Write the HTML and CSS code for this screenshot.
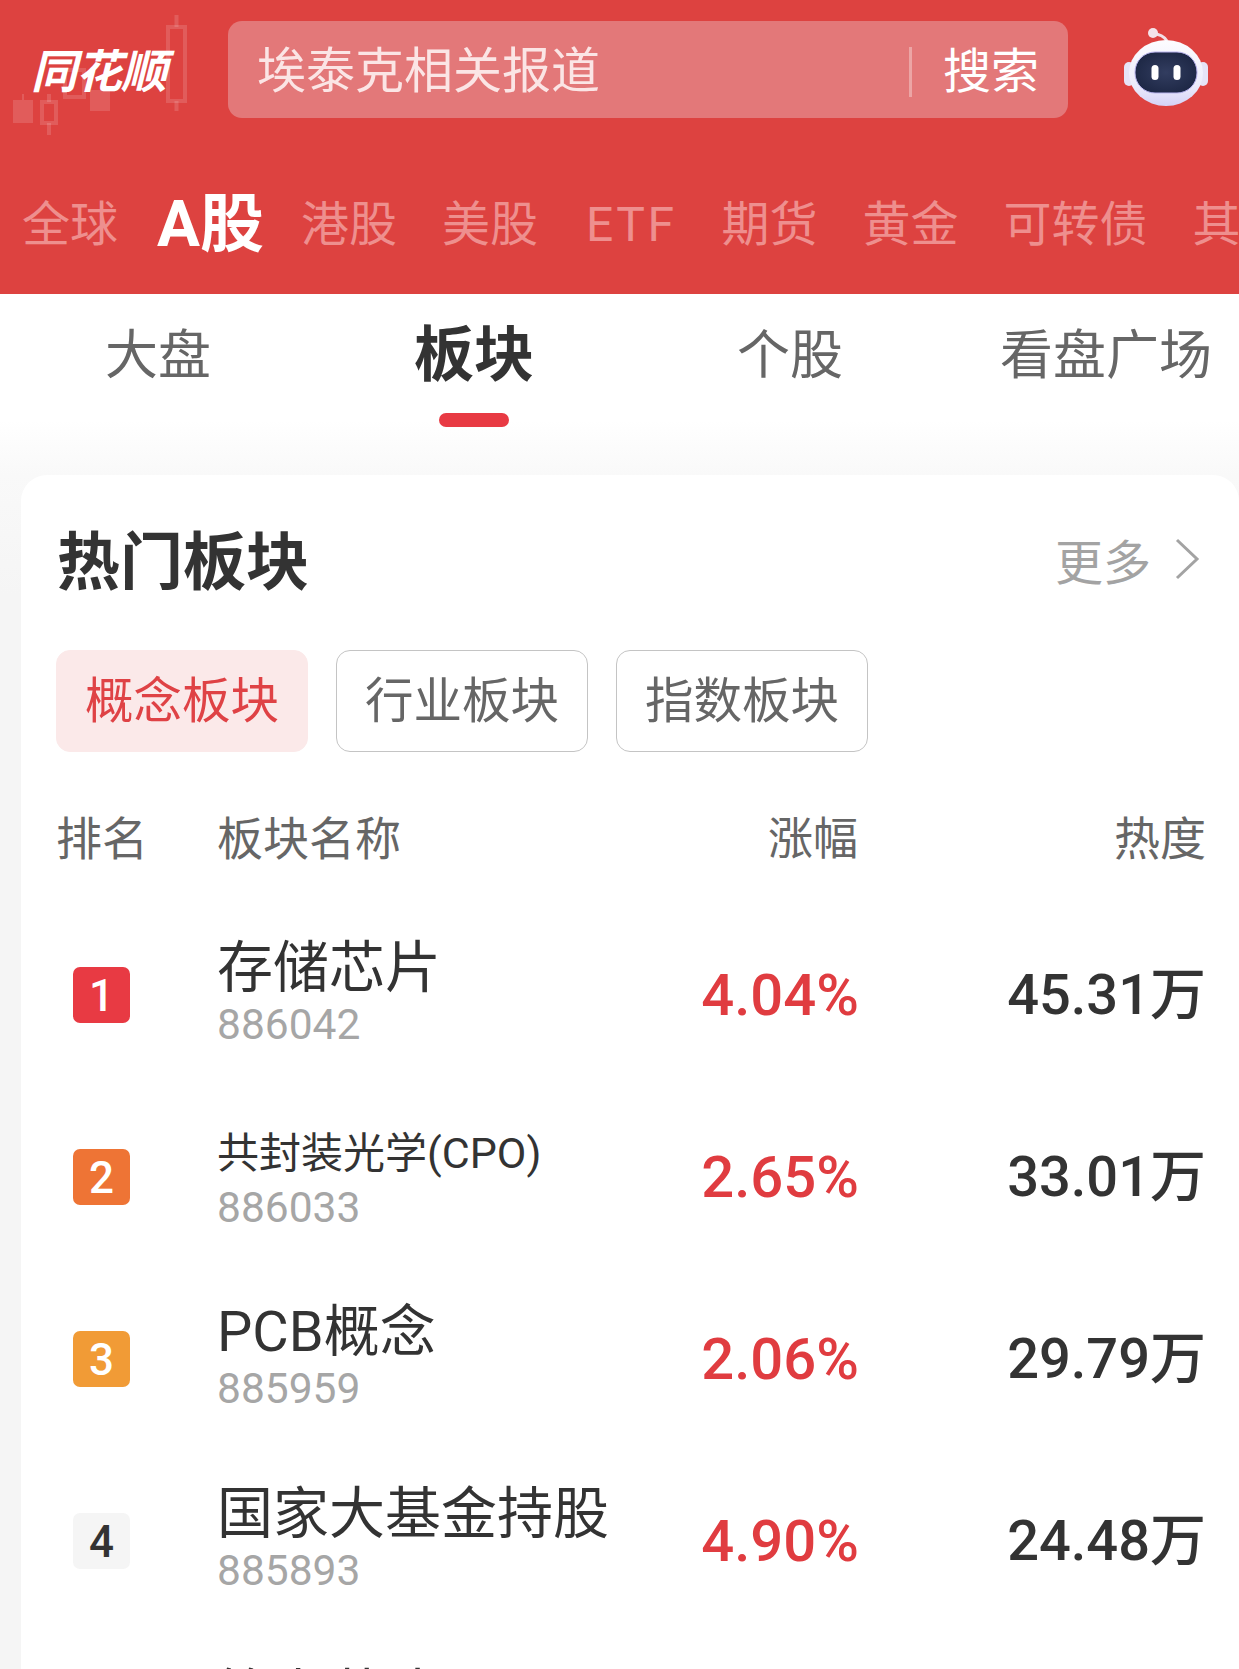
FILE: index.html
```html
<!DOCTYPE html>
<html lang="zh-CN">
<head>
    <meta charset="UTF-8">
    <meta name="viewport" content="width=device-width, initial-scale=1.0">
    <title>同花顺 热门板块</title>
    <link rel="stylesheet" href="styles.css">
</head>
<body>
    <header class="top">
        <svg class="candles" width="200" height="140" viewBox="0 0 200 140">
            <g fill="#fff" fill-opacity="0.14">
                <rect x="13" y="100" width="20" height="23"/>
                <rect x="22" y="94" width="2" height="6"/>
                <rect x="90" y="90" width="20" height="21"/>
            </g>
            <g fill="none" stroke="#fff" stroke-opacity="0.14" stroke-width="4">
                <rect x="42" y="102" width="14" height="21"/>
                <path d="M49 94v8M49 123v12"/>
                <rect x="65" y="70" width="19" height="27"/>
                <rect x="168" y="27" width="17" height="74"/>
                <path d="M176.500 15v12M176.500 101v10"/>
            </g>
        </svg>
        <div class="top-row">
            <div class="logo">同花顺</div>
            <div class="search">
                <span class="search-text">埃泰克相关报道</span>
                <span class="search-btn">搜索</span>
            </div>
            <svg class="robot" width="84" height="84" viewBox="0 0 84 84">
                <defs>
                    <linearGradient id="shell" x1="0" y1="0" x2="0" y2="1">
                        <stop offset="0" stop-color="#fdfcff"/>
                        <stop offset="0.7" stop-color="#ecebfb"/>
                        <stop offset="1" stop-color="#d5d2f6"/>
                    </linearGradient>
                    <radialGradient id="visor">
                        <stop offset="0" stop-color="#323d60"/>
                        <stop offset="1" stop-color="#1f2947"/>
                    </radialGradient>
                </defs>
                <path d="M30 11c4 0 9 1 13 7" fill="none" stroke="#f2dfe6" stroke-width="3"/>
                <circle cx="29" cy="10" r="5" fill="#f4e3e9"/>
                <rect x="0" y="39" width="10" height="24" rx="5" fill="#e6e3f7"/>
                <rect x="74" y="39" width="10" height="24" rx="5" fill="#e6e3f7"/>
                <ellipse cx="42" cy="50" rx="37" ry="33" fill="url(#shell)"/>
                <rect x="11" y="29" width="62" height="41" rx="20" fill="url(#visor)" stroke="#b9b4ee"/>
                <rect x="27.500" y="42" width="7" height="15" rx="3.500" fill="#fff"/>
                <rect x="49.500" y="42" width="7" height="15" rx="3.500" fill="#fff"/>
            </svg>
        </div>
        <nav class="markets">
            <span>全球</span>
            <span class="on">A股</span>
            <span>港股</span>
            <span>美股</span>
            <span class="etf">ETF</span>
            <span>期货</span>
            <span>黄金</span>
            <span>可转债</span>
            <span>其他</span>
        </nav>
    </header>

    <nav class="subtabs">
        <a>大盘</a>
        <a class="on">板块</a>
        <a>个股</a>
        <a>看盘广场</a>
    </nav>

    <main class="wrap">
        <section class="card">
            <div class="card-head">
                <h2>热门板块</h2>
                <div class="more">
                    更多
                    <svg width="26" height="42" viewBox="0 0 26 42">
                        <path d="M3 2l20 19L3 40" fill="none" stroke="#a3a3a3" stroke-width="3"/>
                    </svg>
                </div>
            </div>
            <div class="chips">
                <span class="chip on">概念板块</span>
                <span class="chip">行业板块</span>
                <span class="chip">指数板块</span>
            </div>
            <div class="row thead">
                <div class="c-rank">排名</div>
                <div class="c-name">板块名称</div>
                <div class="c-pct">涨幅</div>
                <div class="c-heat">热度</div>
            </div>
            <div class="row item">
                <div class="c-rank"><span class="badge b1">1</span></div>
                <div class="c-name"><div class="name">存储芯片</div><div class="code">886042</div></div>
                <div class="c-pct">4.04%</div>
                <div class="c-heat">45.31万</div>
            </div>
            <div class="row item">
                <div class="c-rank"><span class="badge b2">2</span></div>
                <div class="c-name"><div class="name small">共封装光学<span class="latin">(CPO)</span></div><div class="code">886033</div></div>
                <div class="c-pct">2.65%</div>
                <div class="c-heat">33.01万</div>
            </div>
            <div class="row item">
                <div class="c-rank"><span class="badge b3">3</span></div>
                <div class="c-name"><div class="name">PCB概念</div><div class="code">885959</div></div>
                <div class="c-pct">2.06%</div>
                <div class="c-heat">29.79万</div>
            </div>
            <div class="row item">
                <div class="c-rank"><span class="badge b4">4</span></div>
                <div class="c-name"><div class="name">国家大基金持股</div><div class="code">885893</div></div>
                <div class="c-pct">4.90%</div>
                <div class="c-heat">24.48万</div>
            </div>
            <div class="row item">
                <div class="c-rank"></div>
                <div class="c-name"><div class="name">算力芯片</div><div class="code">&nbsp;</div></div>
            </div>
        </section>
    </main>
</body>
</html>
```

FILE: styles.css
```css
* {
    box-sizing: border-box;
}

html, body {
    margin: 0;
    height: 1669px;
    overflow: hidden;
}

body {
    background: #fff;
    font-family: Roboto, "Noto Sans CJK SC", sans-serif;
    color: #333;
}

/* red header */
.top {
    position: relative;
    height: 294px;
    background: #dd4240;
    overflow: hidden;
}

.candles {
    position: absolute;
    top: 0;
    left: 0;
}

.top-row {
    position: relative;
    display: flex;
    align-items: center;
    height: 97px;
    margin-top: 21px;
}

.logo {
    width: 228px;
    padding-left: 31px;
    padding-bottom: 4px;
    font-size: 46px;
    font-weight: 700;
    font-style: italic;
    color: #fff;
    letter-spacing: -1px;
}

.search {
    display: flex;
    align-items: center;
    width: 840px;
    height: 97px;
    padding: 4px 29px 0 29px;
    background: #e37879;
    border-radius: 14px;
    font-size: 49px;
    line-height: 50px;
}

.search-text {
    flex: 1;
    color: #fbe5e5;
}

.search-btn {
    padding-left: 31px;
    border-left: 3px solid #eca5a5;
    font-size: 48px;
    color: #fff;
}

.robot {
    margin-left: 56px;
    margin-top: -9px;
}

.markets {
    position: relative;
    display: flex;
    align-items: center;
    gap: 45px;
    height: 72px;
    margin-top: 71px;
    padding-left: 22px;
    font-size: 48px;
    line-height: 72px;
    color: #ee8f8e;
    white-space: nowrap;
}

.markets .on {
    margin: 0 -8px 0 -6px;
    font-size: 64px;
    font-weight: 700;
    color: #fff;
}

.markets .etf {
    margin-left: 3px;
    letter-spacing: 2.500px;
}

/* sub tabs */
.subtabs {
    display: flex;
    width: 1264px;
    height: 181px;
    background: linear-gradient(#fff 70%, #f9f9f9);
}

.subtabs a {
    position: relative;
    flex: 1;
    padding-top: 24px;
    text-align: center;
    font-size: 53px;
    line-height: 76px;
    color: #666;
}

.subtabs a.on {
    font-size: 60px;
    font-weight: 700;
    color: #333;
}

.subtabs a.on::after {
    content: "";
    position: absolute;
    left: 123px;
    top: 119px;
    width: 70px;
    height: 14px;
    border-radius: 7px;
    background: #e83a43;
}

/* card */
.wrap {
    padding: 0 0 0 21px;
    height: 1194px;
    background: linear-gradient(#f9f9f9, #f5f5f5 120px);
}

.card {
    height: 100%;
    padding: 26px 33px 0 36px;
    background: #fff;
    border-radius: 26px 26px 0 0;
}

.card-head {
    display: flex;
    align-items: center;
    justify-content: space-between;
    height: 118px;
}

.card-head h2 {
    margin: 6px 0 0;
    font-size: 63px;
    font-weight: 700;
    line-height: 80px;
}

.more {
    display: flex;
    align-items: center;
    gap: 23px;
    margin-top: -2px;
    padding-right: 6px;
    font-size: 48px;
    color: #a3a3a3;
}

.chips {
    display: flex;
    gap: 28px;
    margin: 31px 0 0 -1px;
}

.chip {
    width: 252px;
    height: 102px;
    border: 1px solid #c4c4c4;
    border-radius: 14px;
    font-size: 48.500px;
    line-height: 102px;
    text-align: center;
    color: #666;
}

.chip.on {
    border-color: #fbe9e9;
    background: #fbe9e9;
    color: #df4245;
}

.row {
    display: flex;
    align-items: center;
}

.thead {
    height: 88px;
    margin-top: 39px;
    font-size: 46px;
    color: #666;
}

.thead .c-rank {
    margin-left: -1px;
    margin-right: 1px;
}

.thead .c-pct {
    font-size: 45px;
    margin-right: -1px;
}

.c-rank {
    width: 160px;
}

.c-name {
    flex: 1;
    min-width: 0;
}

.c-pct {
    width: 240px;
    text-align: right;
}

.c-heat {
    width: 349px;
    text-align: right;
}

.item {
    height: 182px;
    font-size: 56px;
    font-weight: 500;
    line-height: 60px;
}

.item:nth-child(4) {
    margin-top: 25px;
}

.item .c-name {
    padding-bottom: 4px;
}

.item .c-pct {
    margin-right: -2px;
    font-size: 58px;
    color: #e03c40;
}

.badge {
    display: block;
    width: 57px;
    height: 56px;
    margin-left: 16px;
    border-radius: 7px;
    font-size: 44px;
    font-weight: 500;
    line-height: 58px;
    text-align: center;
    color: #fff;
}

.b1 {
    background: #e83a43;
}

.b2 {
    background: #ee7435;
}

.b3 {
    background: #f19b36;
}

.b4 {
    background: #f5f5f5;
    color: #333;
}

.name {
    font-size: 56px;
    font-weight: 400;
    line-height: 64px;
    color: #333;
}

.name.small {
    padding-top: 6px;
    font-size: 42px;
    line-height: 58px;
}

.name .latin {
    font-size: 43px;
}

.code {
    font-size: 42.500px;
    font-weight: 400;
    line-height: 50px;
    color: #a6a6a6;
}
```
